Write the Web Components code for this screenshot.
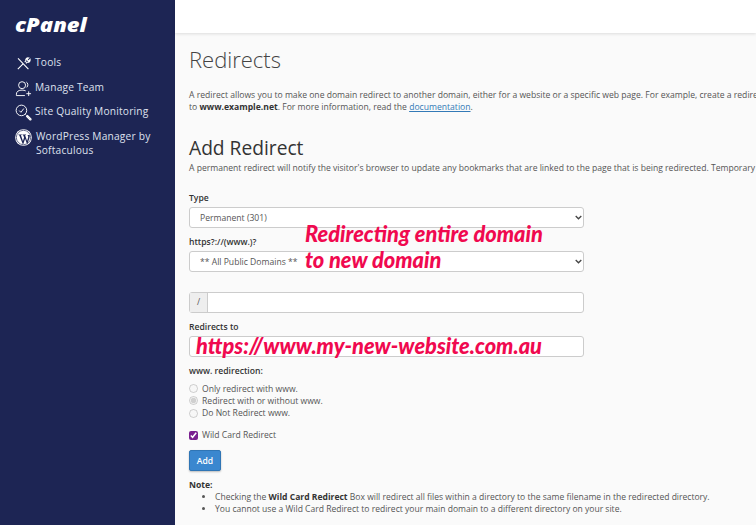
<!DOCTYPE html>
<html lang="en">
<head>
<meta charset="utf-8">
<title>Redirects</title>
<style>
	html, body { margin: 0; height: 100%; }
	body { font-family: "Open Sans", sans-serif; overflow: hidden; }
</style>
</head>
<body>
<cp-app>
	<cp-sidebar slot="side">
		<cp-nav-item label="Tools" icon="tools"></cp-nav-item>
		<cp-nav-item label="Manage Team" icon="team"></cp-nav-item>
		<cp-nav-item label="Site Quality Monitoring" icon="quality"></cp-nav-item>
		<cp-nav-item label="WordPress Manager by Softaculous" icon="wp"></cp-nav-item>
	</cp-sidebar>
	<redirect-page></redirect-page>
</cp-app>

<script>
const ICONS = {
	tools: `<path d="M3.200 3.500l11 11.500M3 15l5.500-5.500M10.300 7.500l1.200-1.300c-.6-1.800.8-3.500 3-3.100l-1.800 1.800 1.500 1.500 1.800-1.800c.4 2.200-1.400 3.500-3.200 3l-1.200 1.200" fill="none" stroke="#fff" stroke-width="1.150"/>`,
	team: `<g fill="none" stroke="#fff" stroke-width="1"><circle cx="7.500" cy="5.500" r="3.700"/><path d="M12 2.200c1.700.6 2.300 4 .5 5.600"/><path d="M1.500 16.500v-1.500c0-3 2.500-4.300 6-4.300 1.500 0 2.800.3 3.800.8M1.500 16.500h9"/><path d="M14.500 12v5M12 14.500h5"/></g>`,
	quality: `<g fill="none" stroke="#fff" stroke-width="1"><circle cx="6.800" cy="6.800" r="5.600"/><path d="M4.500 7l1.800 1.800 3-4"/><path d="M11 11l1.300 1.300"/><path d="M12.300 13.200l1-1 3.700 3.700a.8.8 0 0 1-1 1z" stroke-width="1.200"/></g>`,
	wp: `<circle cx="9" cy="9" r="8.800" fill="#fff"/><circle cx="9" cy="9" r="7.600" fill="none" stroke="#1d2554" stroke-width=".7"/><path d="M3.600 5.900h3.700v.5l-1 .1 2.100 6.200 1.200-3.600-.9-2.600-.8-.1v-.5h3.800v.5l-1 .1 2.100 6.100 1.100-3.500c.3-1.200-.2-2.100-.8-2.700h2.500c.2 1.200 0 2.100-.3 3.100l-2.100 6.100h-.6l-1.900-5.400-1.900 5.800h-.6L4.500 6.500l-.9-.1z" fill="#1d2554"/>`
};

class CpApp extends HTMLElement {
	connectedCallback() {
		let shadow = this.attachShadow({mode: "open"});
		shadow.innerHTML = `
			<style>
				:host {
					display: flex;
					width: 756px;
					height: 525px;
					overflow: hidden;
				}
				#side { flex: 0 0 175px; }
				#main {
					flex: 1;
					min-width: 0;
					display: flex;
					flex-direction: column;
					background: #fafafa;
				}
				#top {
					flex: 0 0 33px;
					background: #fff;
					box-shadow: 0 1px 3px rgba(0,0,0,.12);
				}
				#body { flex: 1; min-height: 0; overflow: hidden; }
			</style>
			<div id="side"><slot name="side"></slot></div>
			<div id="main">
				<div id="top"></div>
				<div id="body"><slot></slot></div>
			</div>
		`;
	}
}
customElements.define("cp-app", CpApp);

class CpSidebar extends HTMLElement {
	connectedCallback() {
		let shadow = this.attachShadow({mode: "open"});
		shadow.innerHTML = `
			<style>
				:host {
					display: block;
					height: 525px;
					background: #1d2554;
					color: #fff;
				}
				#logo {
					padding: 11px 0 0 15px;
					height: 42px;
					box-sizing: border-box;
					font: italic 800 20px/28px "Open Sans", sans-serif;
				}
				#logo span {
					display: inline-block;
					transform: scale(1.1, 1);
					transform-origin: left center;
				}
				nav {
					display: flex;
					flex-direction: column;
					gap: 5px;
					padding: 11px 0 0 15px;
				}
			</style>
			<div id="logo"><span>cPanel</span></div>
			<nav><slot></slot></nav>
		`;
	}
}
customElements.define("cp-sidebar", CpSidebar);

class CpNavItem extends HTMLElement {
	connectedCallback() {
		let shadow = this.attachShadow({mode: "open"});
		let wp = this.getAttribute("icon") == "wp";
		shadow.innerHTML = `
			<style>
				:host {
					display: flex;
					gap: ${wp ? 4 : 3}px;
					align-items: flex-start;
					font: 10.200px/20px "Open Sans", sans-serif;
					letter-spacing: .2px;
					color: #dfe1ee;
					width: 150px;
				}
				svg { flex: 0 0 17px; width: 17px; height: 17px; margin-top: 2px; }
				span { line-height: 14.500px; padding: 2px 0 3px; }
			</style>
			<svg viewBox="0 0 18 18">${ICONS[this.getAttribute("icon")]}</svg>
			<span>${this.getAttribute("label")}</span>
		`;
	}
}
customElements.define("cp-nav-item", CpNavItem);

class FormField extends HTMLElement {
	connectedCallback() {
		let shadow = this.attachShadow({mode: "open"});
		shadow.innerHTML = `
			<style>
				:host { display: block; width: 395px; }
				label {
					display: block;
					font: 600 8.600px/13px "Open Sans", sans-serif;
					color: #333;
					margin-bottom: 2px;
				}
			</style>
			<label>${this.getAttribute("label")}</label>
			<slot></slot>
		`;
	}
}
customElements.define("form-field", FormField);

class CpSelect extends HTMLElement {
	connectedCallback() {
		let shadow = this.attachShadow({mode: "open"});
		shadow.innerHTML = `
			<style>
				:host { display: block; position: relative; }
				select {
					display: block;
					appearance: none;
					box-sizing: border-box;
					width: 395px;
					height: 21px;
					border: 1px solid #ccc;
					border-radius: 3px;
					background: #fff;
					font: 8.600px "Open Sans", sans-serif;
					color: #555;
					padding: 0 10px;
					outline: 0;
				}
				svg { position: absolute; right: 2px; top: 7px; width: 7px; height: 7px; }
			</style>
			<select><option>${this.getAttribute("value")}</option></select>
			<svg viewBox="0 0 7 7"><path d="M.7 2l2.800 2.800L6.300 2" fill="none" stroke="#444" stroke-width="1.300"/></svg>
		`;
	}
}
customElements.define("cp-select", CpSelect);

class RedirectPage extends HTMLElement {
	connectedCallback() {
		let shadow = this.attachShadow({mode: "open"});
		shadow.innerHTML = `
			<style>
				:host {
					display: block;
					position: relative;
					width: 760px;
					padding: 0 0 0 14px;
					font: 8.600px/12px "Open Sans", sans-serif;
					color: #555;
				}
				h1 {
					margin: 0;
					padding-top: 11px;
					font: 300 22px/30px "Open Sans", sans-serif;
					color: #444;
				}
				p { margin: 0; }
				#intro { margin-top: 15px; }
				h2 {
					margin: 22px 0 0;
					font: 400 19.200px/26px "Open Sans", sans-serif;
					color: #333;
				}
				#perm { margin-top: 1px; }
				a { color: #337ab7; text-decoration: underline; }
				b { color: #333; }
				#form { display: flex; flex-direction: column; margin-top: 18px; }
				.ctl {
					box-sizing: border-box;
					width: 395px;
					height: 21px;
					border: 1px solid #ccc;
					border-radius: 3px;
					background: #fff;
				}
				#prefix { display: flex; width: 395px; height: 21px; box-sizing: border-box; border: 1px solid #ccc; border-radius: 3px; background: #fff; margin-top: 20px; }
				#prefix span { flex: 0 0 17px; background: #eee; border-right: 1px solid #ccc; text-align: center; line-height: 19px; }
				.radio { display: flex; align-items: center; gap: 4px; height: 12.300px; }
				.radio input, .check input { margin: 0; width: 9px; height: 9px; }
				#www { font: 600 8.600px/13px "Open Sans", sans-serif; color: #333; margin: 8px 0 4.500px; }
				.check { display: flex; align-items: center; gap: 4px; margin-top: 10px; height: 12px; }
				.check input { accent-color: #7a1f8f; }
				button {
					align-self: flex-start;
					margin-top: 9px;
					width: 32px;
					height: 21px;
					border: 1px solid #2f75b5;
					border-radius: 2px;
					background: #3a87cf;
					color: #fff;
					font: 600 8.600px "Open Sans", sans-serif;
					padding: 0;
					box-shadow: 0 1px 2px rgba(0,0,0,.25);
				}
				#note { margin-top: 9px; }
				#note > b { display: block; line-height: 11px; }
				ul { margin: 0; padding: 0 0 0 26px; line-height: 12px; font-size: 8.550px; }
				.ann {
					position: absolute;
					font: italic 900 21.800px/26px Lato, sans-serif;
					color: #f0094f;
					white-space: nowrap;
				}
			</style>
			<h1>Redirects</h1>
			<p id="intro">A redirect allows you to make one domain redirect to another domain, either for a website or a specific web page. For example, create a redirect from <b>www.example.com</b><br>to <b>www.example.net</b>. For more information, read the <a href="#">documentation</a>.</p>
			<h2>Add Redirect</h2>
			<p id="perm">A permanent redirect will notify the visitor's browser to update any bookmarks that are linked to the page that is being redirected. Temporary redirects will not.</p>
			<div id="form">
				<form-field label="Type" style="margin-bottom:8px"><cp-select value="Permanent (301)"></cp-select></form-field>
				<form-field label="https?://(www.)?"><cp-select value="** All Public Domains **"></cp-select></form-field>
				<div id="prefix"><span>/</span></div>
				<form-field label="Redirects to" style="margin-top:8px"><div class="ctl"></div></form-field>
				<div id="www">www. redirection:</div>
				<label class="radio"><input type="radio" name="w" disabled>Only redirect with www.</label>
				<label class="radio"><input type="radio" name="w" checked disabled>Redirect with or without www.</label>
				<label class="radio"><input type="radio" name="w" disabled>Do Not Redirect www.</label>
				<label class="check"><input type="checkbox" checked>Wild Card Redirect</label>
				<button>Add</button>
			</div>
			<div id="note">
				<b>Note:</b>
				<ul>
					<li>Checking the <b>Wild Card Redirect</b> Box will redirect all files within a directory to the same filename in the redirected directory.</li>
					<li>You cannot use a Wild Card Redirect to redirect your main domain to a different directory on your site.</li>
				</ul>
			</div>
			<div class="ann" style="left:130px;top:188px">Redirecting entire domain</div>
			<div class="ann" style="left:130px;top:214px">to new domain</div>
			<div class="ann" style="left:21px;top:300px">https://www.my-new-website.com.au</div>
		`;
	}
}
customElements.define("redirect-page", RedirectPage);
</script>
</body>
</html>
